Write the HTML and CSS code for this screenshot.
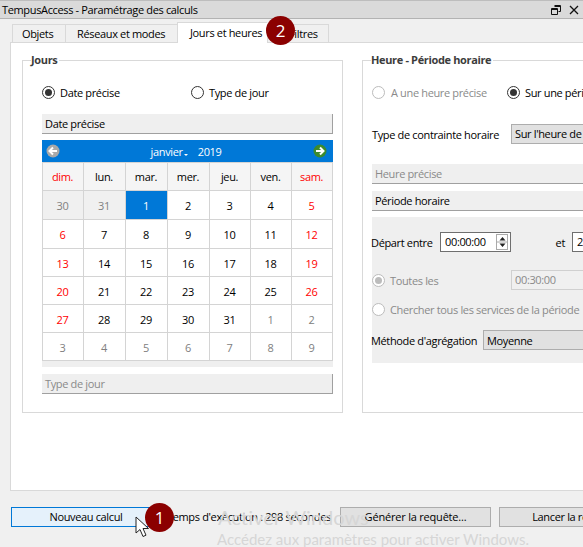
FILE: index.html
```html
<!DOCTYPE html>
<html lang="fr">
<head>
  <meta charset="UTF-8" />
  <title>TempusAccess - Paramétrage des calculs</title>
  <link rel="stylesheet" href="styles.css">
</head>
<body>
  <div class="window">
    <div class="titlebar">
      <span>TempusAccess - Paramétrage des calculs</span>
      <div class="window-buttons">
        <svg width="10" height="10" viewBox="0 0 10 10"><path d="M3.5 .5h6v6h-2M.5 3.5h6v6h-6zM.5 4.5h6M3.5 1.5h6" fill="none" stroke="#111"/></svg>
        <svg width="10" height="10" viewBox="0 0 10 10"><path d="M1 1l8 8M9 1l-8 8" fill="none" stroke="#111" stroke-width="1.3"/></svg>
      </div>
    </div>

    <div class="tabs">
      <div class="tab tab-objets">Objets</div>
      <div class="tab tab-reseaux">Réseaux et modes</div>
      <div class="tab tab-jours">Jours et heures</div>
      <div class="tab tab-filtres">Filtres</div>
    </div>

    <div class="pane">
      <fieldset class="group group-jours">
        <legend>Jours</legend>
        <div class="radio-row">
          <label class="radio-item radio-date"><i class="radio checked"></i>Date précise</label>
          <label class="radio-item"><i class="radio"></i>Type de jour</label>
        </div>
        <div class="section-head">Date précise</div>
        <div class="cal-head">
          <svg width="14" height="14" viewBox="0 0 14 14"><circle cx="7" cy="7" r="6.5" fill="#a9a9a9"/><path d="M11 7H4M7 3.5L3.5 7 7 10.5" fill="none" stroke="#fff" stroke-width="2"/></svg>
          <div class="cal-month"><span class="month">janvier</span><i class="month-arrow"></i><span class="year">2019</span></div>
          <svg width="14" height="14" viewBox="0 0 14 14"><circle cx="7" cy="7" r="6.5" fill="#3c8a2e"/><path d="M3 7h7M7 3.5L10.5 7 7 10.5" fill="none" stroke="#fff" stroke-width="2"/></svg>
        </div>
        <div class="calendar">
          <div class="dow we">dim.</div><div class="dow">lun.</div><div class="dow">mar.</div><div class="dow">mer.</div><div class="dow">jeu.</div><div class="dow">ven.</div><div class="dow we">sam.</div>

          <div class="day before">30</div><div class="day before">31</div><div class="day selected">1</div><div class="day">2</div><div class="day">3</div><div class="day">4</div><div class="day we">5</div>
          <div class="day we">6</div><div class="day">7</div><div class="day">8</div><div class="day">9</div><div class="day">10</div><div class="day">11</div><div class="day we">12</div>
          <div class="day we">13</div><div class="day">14</div><div class="day">15</div><div class="day">16</div><div class="day">17</div><div class="day">18</div><div class="day we">19</div>
          <div class="day we">20</div><div class="day">21</div><div class="day">22</div><div class="day">23</div><div class="day">24</div><div class="day">25</div><div class="day we">26</div>
          <div class="day we">27</div><div class="day">28</div><div class="day">29</div><div class="day">30</div><div class="day">31</div><div class="day other">1</div><div class="day other">2</div>
          <div class="day other">3</div><div class="day other">4</div><div class="day other">5</div><div class="day other">6</div><div class="day other">7</div><div class="day other">8</div><div class="day other">9</div>
        </div>
        <div class="cal-foot"></div>
        <div class="section-head off">Type de jour</div>
      </fieldset>

      <fieldset class="group group-heure">
        <legend>Heure - Période horaire</legend>
        <div class="radio-row">
          <label class="radio-item radio-heure off"><i class="radio"></i>A une heure précise</label>
          <label class="radio-item"><i class="radio checked"></i>Sur une période</label>
        </div>
        <div class="field-row constraint">
          <span class="constraint-label">Type de contrainte horaire</span>
          <div class="combo">Sur l'heure de départ</div>
        </div>
        <div class="section-head flat off">Heure précise</div>
        <div class="section-head flat">Période horaire</div>
        <div class="period">
          <div class="field-row">
            <span class="depart-label">Départ entre</span>
            <div class="spin">00:00:00
              <div class="spin-btn"><svg width="11" height="16" viewBox="0 0 11 16"><path d="M5.5 3L2.5 6.5h6zM5.5 13l3-3.5h-6z" fill="#222"/><path d="M0 8h11" stroke="#aaa"/></svg></div>
            </div>
            <span class="et-label">et</span>
            <div class="spin">23:59:59</div>
          </div>
          <div class="field-row toutes off">
            <label class="radio-item"><i class="radio dot"></i>Toutes les</label>
            <div class="time-off">00:30:00</div>
          </div>
          <label class="radio-item chercher off"><i class="radio"></i>Chercher tous les services de la période</label>
          <div class="field-row methode">
            <span class="methode-label">Méthode d'agrégation</span>
            <div class="combo wide">Moyenne</div>
          </div>
        </div>
      </fieldset>
    </div>

    <div class="bottom">
      <button class="btn btn-new">Nouveau calcul</button>
      <span class="exec">Temps d'exécution : 298 secondes</span>
      <button class="btn btn-gen">Générer la requête...</button>
      <button class="btn btn-run">Lancer la requête</button>
    </div>
  </div>

  <!-- things lying over the dialog -->
  <div class="watermark wm-1">Activer Windows</div>
  <div class="watermark wm-2">Accédez aux paramètres pour activer Windows.</div>
  <div class="badge badge-1">1</div>
  <div class="badge badge-2">2</div>
  <svg class="cursor" width="14" height="22" viewBox="0 0 14 22"><path d="M1 1v16l4-3.500 3 7 3-1.300-3-6.700h5.500z" fill="#fff" stroke="#222"/></svg>
</body>
</html>
```

FILE: styles.css
```css
html, body {
  margin: 0;
  height: 100%;
  overflow: hidden;
}

body {
  position: relative;
  width: 583px;
  height: 547px;
  background: #f0f0f0;
  color: #000;
  font-family: "Open Sans", "Noto Sans", sans-serif;
  font-size: 11px;
  letter-spacing: -0.35px;
}

.window {
  width: 720px;
  height: 547px;
  display: flex;
  flex-direction: column;
}

.titlebar {
  width: 583px;
  height: 19px;
  box-sizing: border-box;
  border-top: 1px solid #bdbdbd;
  border-bottom: 1px solid #b3b3b3;
  background: #dadada;
  display: flex;
  justify-content: space-between;
  align-items: center;
  padding-left: 2px;
}

.window-buttons {
  display: flex;
  gap: 8px;
  padding-right: 4px;
}

.tabs {
  height: 23px;
  padding-left: 12px;
  display: flex;
  align-items: flex-end;
  position: relative;
  z-index: 1;
}

.tab {
  height: 18px;
  box-sizing: border-box;
  border: 1px solid #d9d9d9;
  border-bottom: none;
  border-right: none;
  background: #f0f0f0;
  line-height: 17px;
  white-space: nowrap;
}

.tab-objets { width: 53px; padding-left: 9px; }
.tab-reseaux { width: 112px; padding-left: 11px; }
.tab-jours {
  width: 90px;
  height: 21px;
  margin-bottom: -1px;
  padding-left: 12px;
  line-height: 19px;
  background: #fff;
}
.tab-filtres { width: 62px; padding-left: 21px; border-right: 1px solid #d9d9d9; }

.pane {
  margin-left: 10px;
  height: 449px;
  box-sizing: border-box;
  border: 1px solid #d9d9d9;
  background: #fff;
  padding: 11px 0 0 11px;
  display: flex;
  gap: 19px;
}

.group {
  margin: 0;
  padding: 0;
  min-width: 0;
  border: 1px solid #d9d9d9;
  height: 359px;
  box-sizing: border-box;
}

.group legend {
  padding: 0 2px 0 0;
  font-weight: 700;
  color: #3c3c3c;
  line-height: 12px;
}

.group-jours {
  width: 321px;
  padding: 0 9px 0 19px;
}

.group-jours legend { margin-left: -11px; }

.group-heure {
  width: 330px;
  padding: 0 0 0 9px;
}

.group-heure legend { margin-left: -1px; }

.radio-row {
  display: flex;
  margin-top: 19px;
  height: 15px;
  align-items: center;
}

.radio-item {
  display: flex;
  align-items: center;
  gap: 5px;
  white-space: nowrap;
}

.radio-date { width: 149px; }
.radio-heure { width: 135px; gap: 6px; }

.radio {
  width: 11px;
  height: 11px;
  border: 1px solid #333;
  border-radius: 50%;
  background: #fff;
  position: relative;
  flex: none;
}

.radio.checked::after,
.radio.dot::after {
  content: "";
  position: absolute;
  left: 2px;
  top: 2px;
  width: 7px;
  height: 7px;
  border-radius: 50%;
  background: #333;
}

.off { color: #8a8a8a; }
.off .radio { border-color: #bcbcbc; }
.off .radio.dot::after { background: #bcbcbc; }

.section-head {
  width: 291px;
  height: 20px;
  margin-top: 14px;
  box-sizing: border-box;
  padding-left: 3px;
  line-height: 19px;
  background: #efefef;
  border-right: 1px solid #a0a0a0;
  border-bottom: 1px solid #a0a0a0;
}

.section-head.flat {
  width: 100%;
  height: 20px;
  margin-top: 7px;
  border-right: none;
}

.cal-head {
  width: 291px;
  height: 22px;
  margin-top: 6px;
  padding: 0 6px 0 4px;
  box-sizing: border-box;
  background: #0078d7;
  color: #fff;
  display: flex;
  align-items: center;
  justify-content: space-between;
}

.cal-month {
  display: flex;
  align-items: center;
  margin-right: 1px;
}

.month-arrow {
  width: 0;
  height: 0;
  margin: 8px 10px 0 1px;
  border: 2.500px solid transparent;
  border-top-color: #fff;
  border-bottom: none;
}

.calendar {
  width: 291px;
  box-sizing: border-box;
  display: grid;
  grid-template-columns: 41px 42px 42px 42px 41px 41px 41px;
  grid-template-rows: 28px 29px 29px 28px 28px 28px 28px;
  border-right: 1px solid #d4d4d4;
  border-bottom: 1px solid #d4d4d4;
}

.dow, .day {
  border-left: 1px solid #d4d4d4;
  border-top: 1px solid #d4d4d4;
  display: flex;
  align-items: center;
  justify-content: center;
  padding-right: 1px;
}

.day { padding-top: 1px; }
.dow { background: #f5f5f5; }
.we { color: #f00; }
.before { background: #f0f0f0; color: #808080; }
.other { color: #808080; }
.selected { background: #0078d7; color: #fff; }

.cal-foot {
  width: 291px;
  height: 6px;
  background: #efefef;
}

.cal-foot + .section-head {
  margin-top: 7px;
}

.field-row {
  display: flex;
  align-items: center;
  white-space: nowrap;
}

.constraint {
  margin-top: 24px;
  height: 20px;
}

.constraint-label {
  width: 139px;
  flex: none;
}

.combo {
  height: 20px;
  width: 190px;
  box-sizing: border-box;
  border: 1px solid #adadad;
  background: #e1e1e1;
  padding-left: 3px;
  line-height: 18px;
  white-space: nowrap;
  flex: none;
}

.combo.wide { width: 240px; line-height: 19px; }

.constraint + .section-head.flat {
  margin-top: 20px;
}

.period {
  margin-top: 6px;
  height: 146px;
  background: #efefef;
  padding-top: 15px;
  box-sizing: border-box;
}

.depart-label { width: 69px; margin-left: -1px; flex: none; }

.spin {
  width: 71px;
  height: 20px;
  box-sizing: border-box;
  border: 1px solid #6f6f6f;
  background: #fff;
  padding-left: 4px;
  line-height: 18px;
  position: relative;
  flex: none;
}

.spin-btn {
  position: absolute;
  right: 2px;
  top: 0;
  width: 12px;
  height: 16px;
  margin-top: 1px;
  border: 1px solid #aaa;
  box-sizing: border-box;
  overflow: hidden;
}

.spin-btn svg { display: block; margin-top: -1px; }

.et-label {
  width: 61px;
  flex: none;
  text-align: right;
  padding-right: 7px;
  box-sizing: border-box;
}

.toutes {
  margin-top: 18px;
  height: 20px;
}

.toutes .radio-item { width: 139px; flex: none; }

.time-off {
  width: 120px;
  height: 20px;
  box-sizing: border-box;
  border: 1px solid #d0d0d0;
  background: #f0f0f0;
  padding-left: 3px;
  line-height: 18px;
  flex: none;
}

.chercher {
  margin-top: 11px;
  height: 16px;
}

.methode {
  margin-top: 13px;
  height: 20px;
}

.methode-label { width: 112px; margin-left: -1px; flex: none; }

.bottom {
  flex: 1;
  display: flex;
  align-items: flex-start;
  padding: 16px 0 0 11px;
  box-sizing: border-box;
}

.btn {
  height: 20px;
  padding: 0;
  font: inherit;
  letter-spacing: inherit;
  color: #000;
  border: 1px solid #adadad;
  background: #e1e1e1;
  line-height: 18px;
  flex: none;
}

.btn-new {
  width: 150px;
  background: #e5f1fb;
  border-color: #0078d7;
}

.exec {
  width: 179px;
  line-height: 20px;
  padding-left: 6px;
  box-sizing: border-box;
  white-space: nowrap;
  flex: none;
}

.btn-gen { width: 151px; letter-spacing: -0.2px; }
.btn-run { width: 150px; margin-left: 8px; }

/* overlays */
.watermark {
  position: absolute;
  color: #d6d6d6;
  white-space: nowrap;
  font-family: Lato, sans-serif;
  font-size: 20px;
  letter-spacing: 0;
}

.wm-1 { left: 218px; top: 505px; }
.wm-2 { left: 217px; top: 530px; font-size: 15px; }

.badge {
  position: absolute;
  z-index: 2;
  width: 29px;
  height: 29px;
  border-radius: 50%;
  background: #8b0000;
  color: #fff;
  font-size: 17px;
  line-height: 29px;
  text-align: center;
}

.badge-1 { left: 145px; top: 503px; }
.badge-2 { left: 266px; top: 16px; }

.cursor {
  position: absolute;
  z-index: 1;
  left: 135px;
  top: 516px;
}
```
